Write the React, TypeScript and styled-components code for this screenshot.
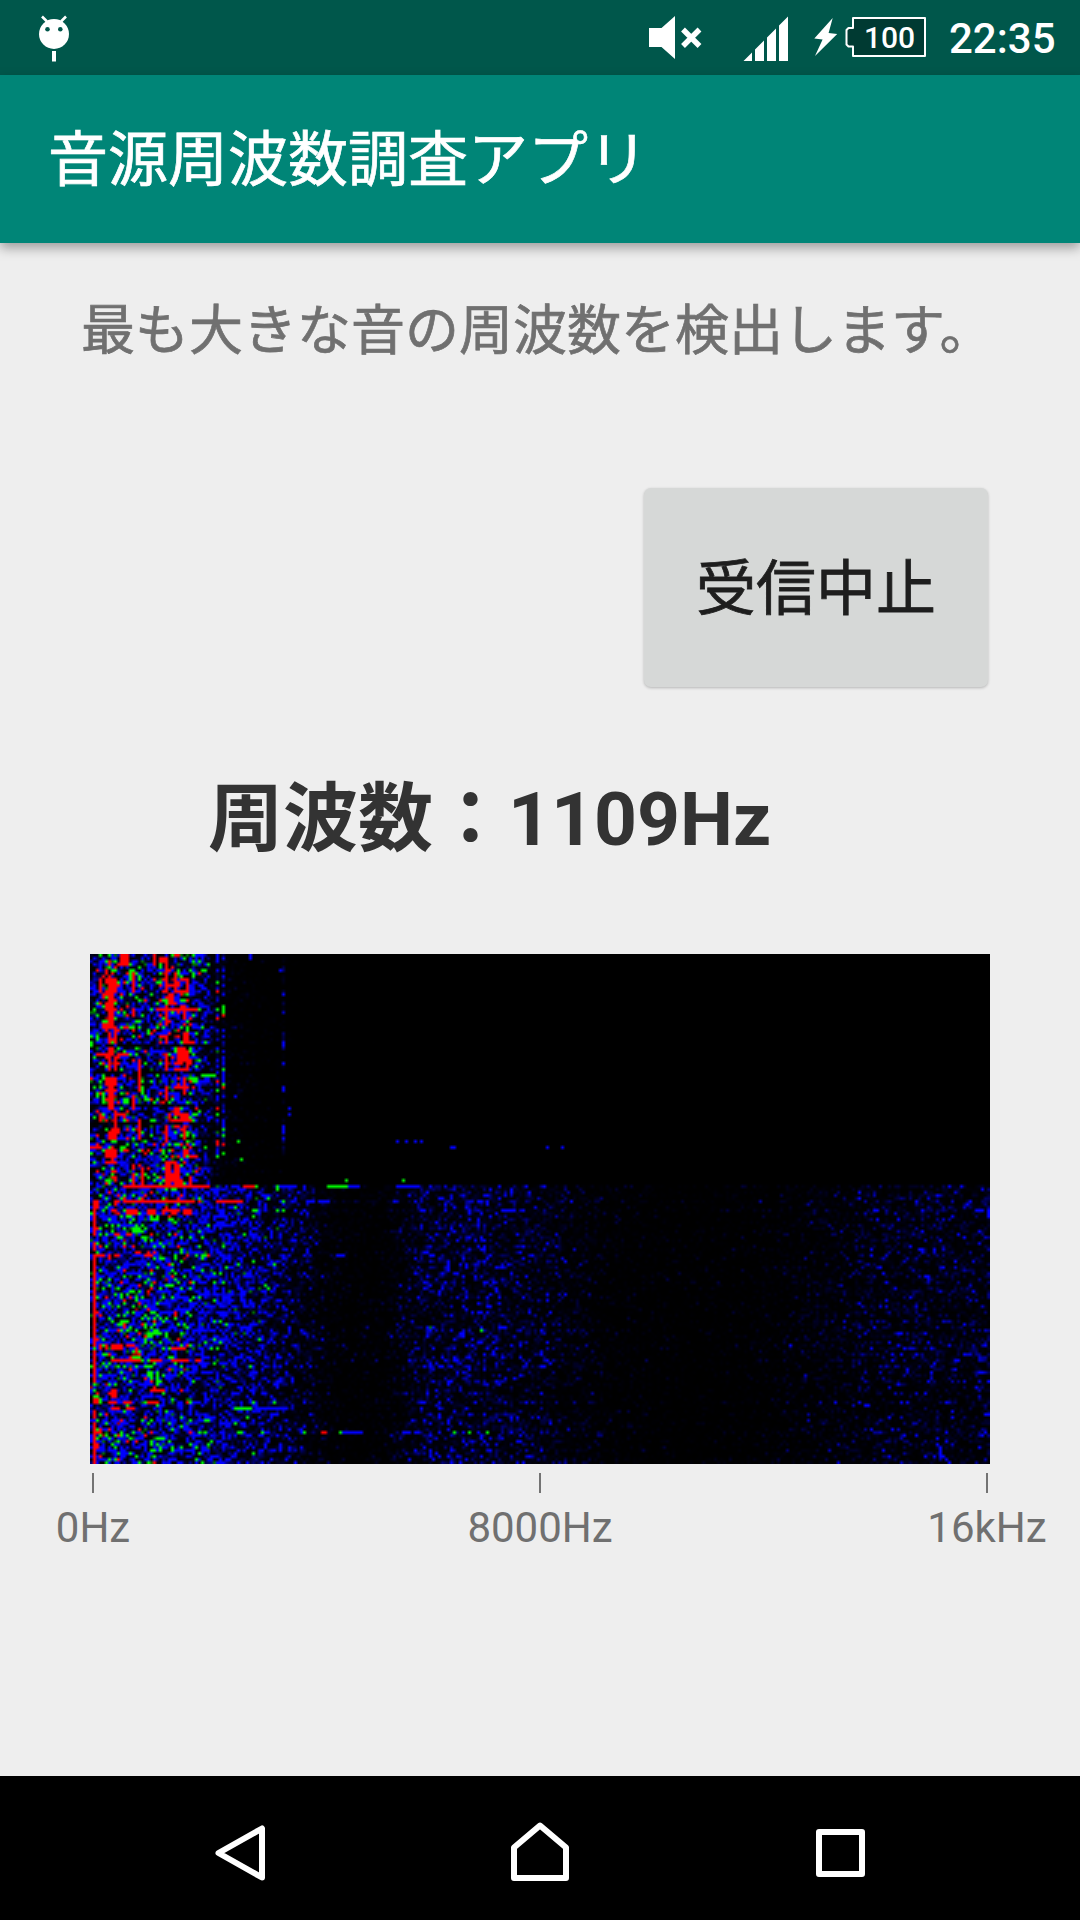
import React, { useEffect, useRef } from "react";
import styled, { createGlobalStyle } from "styled-components";

const GlobalStyle = createGlobalStyle`
  *, *::before, *::after { box-sizing: border-box; }
  body { margin: 0; background: #eeeeee; }
`;

const Screen = styled.div`
  width: 1080px;
  height: 1920px;
  display: flex;
  flex-direction: column;
  overflow: hidden;
  background: #eeeeee;
  font-family: Roboto, "Noto Sans CJK JP", sans-serif;
`;

const StatusBar = styled.header`
  height: 75px;
  flex: none;
  display: flex;
  align-items: center;
  justify-content: space-between;
  padding: 0 23px 0 38px;
  background: #00574b;
  color: #fff;
`;

const StatusIcon = styled.svg`
  display: block;
  flex: none;
`;

const StatusGroup = styled.div`
  display: flex;
  align-items: center;
  height: 75px;
`;

const StatusIcons = styled.div`
  display: flex;
  > :nth-child(2) { margin-left: 41px; }
  > :nth-child(3) { margin-left: 25px; }
`;

const Battery = styled.div`
  display: grid;
  margin-left: 7px;
  > * { grid-area: 1 / 1; }
`;

const BatteryLevel = styled.span`
  padding-left: 7px;
  text-align: center;
  font-size: 30px;
  font-weight: 500;
  line-height: 75px;
`;

const Clock = styled.time`
  width: 108px;
  margin-left: 22px;
  padding-top: 2px;
  font-size: 42px;
  font-weight: 500;
  line-height: 78px;
  white-space: nowrap;
`;

const Toolbar = styled.div`
  position: relative;
  flex: none;
  height: 168px;
  display: flex;
  align-items: center;
  padding: 3px 0 0 48px;
  background: #008577;
  box-shadow: 0 5px 11px rgba(0, 0, 0, 0.34);
`;

const Title = styled.h1`
  margin: 0;
  color: #fff;
  font-size: 60px;
  font-weight: 400;
  line-height: 84px;
  -webkit-text-stroke: 0.7px currentColor;
`;

const Content = styled.main`
  flex: 1;
  display: flex;
  flex-direction: column;
`;

const Description = styled.p`
  margin: 49px 0 0 81px;
  font-size: 54px;
  line-height: 80px;
  color: #707070;
  white-space: nowrap;
  -webkit-text-stroke: 0.7px currentColor;
`;

const StopButton = styled.button`
  align-self: flex-end;
  width: 344px;
  height: 199px;
  margin: 116px 92px 0 0;
  padding: 5px 0 0;
  border: 0;
  border-radius: 7px;
  background: #d6d8d7;
  box-shadow: 0 1px 3px rgba(0, 0, 0, 0.24);
  color: #1e1e1e;
  font-family: inherit;
  font-size: 60px;
  line-height: 84px;
  -webkit-text-stroke: 0.8px currentColor;
`;

const Frequency = styled.p`
  margin: 80px 0 0 208px;
  font-size: 75px;
  font-weight: 700;
  line-height: 104px;
  color: #333333;
  white-space: nowrap;
`;

const Spectrogram = styled.canvas`
  display: block;
  width: 900px;
  height: 510px;
  margin: 83px 0 0 90px;
  background: #000;
`;

const Axis = styled.div`
  display: flex;
  justify-content: space-between;
  margin: 9px 13px 0 13px;
`;

const Mark = styled.div`
  width: 160px;
  display: flex;
  flex-direction: column;
  align-items: center;
  gap: 10px;
  font-size: 42px;
  line-height: 50px;
  color: #707070;
  &::before {
    content: "";
    width: 2px;
    height: 20px;
    background: #737373;
  }
`;

const NavBar = styled.nav`
  flex: none;
  height: 144px;
  display: flex;
  align-items: center;
  justify-content: center;
  gap: 210px;
  background: #000;
`;

const NavButton = styled.button`
  width: 90px;
  height: 90px;
  padding: 0;
  border: 0;
  background: none;
  svg { display: block; }
`;

const COLS = 300;
const ROWS = 170;

type Point = [number, number];
type Block = [number, number, number, number];

/* Mean level per frequency bin while sound is played (upper part). */
const loudProfile: Point[] = [
  [0, 0.8], [1, 0.9], [2, 1.5], [4, 1.7], [9, 1.5], [12, 1.6], [16, 1.1], [22, 1.1], [24, 1.8],
  [31, 2.1], [34, 1.2], [37, 0.6], [40, 0.28], [43, 0.11], [55, 0.06], [66, 0.025], [80, 0.005], [300, 0],
];
/* Mean level per frequency bin for the ambient noise (lower part). */
const noiseProfile: Point[] = [
  [0, 1.3], [3, 1.35], [18, 1.45], [27, 1.2], [32, 1.0], [38, 0.95], [48, 0.75], [58, 0.5], [68, 0.32], [78, 0.15],
  [88, 0.08], [98, 0.1], [106, 0.24], [112, 0.36], [133, 0.37], [145, 0.28], [160, 0.2],
  [172, 0.1], [200, 0.06], [225, 0.09], [245, 0.16], [258, 0.22], [275, 0.25], [299, 0.26],
];

/* Saturated areas: first column, last column, first row, last row. */
const peaks: Block[] = [
  [10, 12, 0, 3], [21, 21, 0, 3], [23, 25, 1, 2], [28, 29, 0, 0], [25, 25, 4, 12], [28, 28, 6, 12],
  [29, 29, 9, 10], [30, 32, 8, 8], [32, 32, 8, 12], [28, 31, 12, 12], [14, 14, 6, 12], [5, 8, 8, 8],
  [6, 8, 9, 12], [5, 7, 13, 13], [3, 3, 8, 12], [6, 7, 14, 23], [5, 7, 16, 16], [26, 27, 13, 16],
  [23, 35, 18, 18], [31, 31, 17, 21], [25, 25, 17, 23], [14, 14, 18, 20], [4, 7, 24, 24],
  [6, 6, 26, 29], [8, 8, 24, 29], [23, 25, 27, 27], [25, 25, 27, 29], [31, 32, 26, 29], [33, 34, 29, 29],
  [6, 7, 31, 32], [5, 7, 33, 33], [3, 4, 33, 33], [9, 12, 33, 33], [16, 16, 35, 44], [6, 6, 34, 38],
  [8, 8, 34, 38], [29, 31, 31, 35], [28, 30, 36, 36], [28, 32, 38, 38], [32, 32, 32, 37], [25, 25, 33, 38],
  [5, 8, 41, 43], [6, 7, 44, 51], [31, 31, 41, 46], [28, 32, 44, 44], [25, 25, 44, 48],
  [8, 8, 52, 61], [6, 7, 59, 61], [5, 8, 65, 67], [9, 11, 53, 53], [28, 29, 51, 53], [30, 32, 53, 54],
  [28, 32, 55, 55], [3, 3, 53, 55], [0, 3, 64, 64], [31, 32, 65, 66], [33, 35, 67, 67], [25, 25, 57, 62],
  [31, 31, 57, 61], [25, 28, 69, 69], [25, 26, 70, 77], [28, 29, 70, 77], [27, 27, 73, 75], [17, 17, 71, 77],
  [14, 14, 70, 71], [14, 14, 73, 77], [33, 33, 74, 77], [16, 16, 55, 61], [14, 14, 47, 51],
  [11, 39, 77, 77], [51, 54, 77, 77], [8, 9, 82, 82], [11, 34, 82, 82], [36, 36, 82, 82], [42, 50, 82, 82],
  [7, 8, 85, 85], [12, 15, 85, 86], [19, 21, 85, 86], [24, 29, 85, 85], [27, 28, 86, 86], [31, 33, 85, 86],
  [1, 2, 82, 84], [1, 1, 85, 93], [8, 9, 93, 93], [12, 13, 93, 93], [20, 20, 93, 93], [1, 1, 96, 98],
  [1, 4, 100, 100], [6, 6, 100, 100], [8, 9, 100, 100], [19, 20, 100, 100], [32, 32, 100, 100], [39, 39, 100, 100],
  [1, 1, 101, 130], [7, 10, 130, 131], [12, 14, 130, 130], [3, 3, 130, 130], [5, 5, 130, 131], [27, 31, 131, 131], [32, 32, 130, 130],
  [1, 1, 132, 142], [7, 16, 135, 135], [20, 23, 135, 135], [27, 32, 135, 135], [35, 36, 135, 135],
  [7, 8, 145, 147], [6, 7, 146, 146], [20, 24, 145, 145], [1, 2, 148, 149], [6, 8, 149, 149], [11, 13, 149, 149],
  [19, 22, 149, 149], [7, 9, 151, 151], [12, 14, 151, 151], [1, 1, 152, 154], [1, 1, 156, 158], [1, 3, 159, 159],
  [1, 1, 160, 169], [2, 2, 163, 164], [3, 3, 167, 167], [20, 20, 159, 159], [33, 33, 159, 159], [77, 78, 159, 159],
  [42, 42, 12, 12], [42, 42, 21, 21], [44, 44, 20, 20], [42, 42, 42, 42], [42, 42, 51, 51], [42, 42, 62, 63],
  [44, 44, 63, 63], [44, 44, 44, 44],
];
const greens: Block[] = [
  [53, 55, 77, 77], [62, 62, 77, 77], [79, 85, 77, 77], [85, 85, 75, 75], [104, 104, 75, 75],
  [54, 55, 85, 85], [62, 62, 85, 85], [64, 64, 85, 85], [64, 64, 82, 82], [59, 59, 81, 81],
  [37, 38, 5, 5], [37, 41, 40, 40], [44, 44, 17, 19], [42, 42, 9, 9], [42, 42, 18, 18], [44, 44, 38, 38],
  [42, 42, 45, 45], [44, 44, 58, 58], [44, 44, 60, 60], [44, 44, 66, 66], [50, 50, 68, 68], [49, 49, 62, 62],
  [19, 20, 126, 127], [20, 23, 126, 126], [19, 20, 139, 140], [22, 22, 139, 143], [58, 58, 110, 110], [59, 59, 111, 111],
  [48, 53, 151, 151], [61, 61, 149, 149], [49, 50, 159, 159], [57, 57, 159, 159], [83, 83, 159, 159], [71, 71, 159, 159], [121, 121, 159, 159], [126, 126, 159, 159],
  [132, 132, 159, 159], [22, 24, 161, 161], [14, 16, 91, 92], [20, 20, 87, 88], [13, 14, 5, 8],
];
const blues: Block[] = [
  [63, 68, 77, 77], [86, 89, 77, 77], [102, 109, 77, 77], [72, 74, 82, 82], [76, 79, 82, 82],
  [42, 42, 0, 2], [53, 53, 0, 1], [64, 64, 13, 13], [64, 64, 30, 30], [64, 64, 44, 45], [64, 64, 57, 59],
  [64, 64, 61, 61], [66, 66, 51, 51], [66, 66, 53, 53], [63, 63, 5, 5], [48, 48, 47, 47], [64, 64, 36, 36],
  [102, 102, 62, 62], [105, 105, 62, 62], [108, 108, 62, 62], [110, 110, 62, 62], [120, 121, 64, 64], [152, 152, 64, 64],
  [157, 157, 64, 64], [82, 84, 100, 100], [55, 65, 151, 151], [84, 90, 159, 159], [104, 106, 159, 159], [108, 109, 159, 159],
  [119, 119, 102, 105], [137, 140, 85, 85], [295, 297, 85, 85], [299, 299, 85, 87], [278, 279, 107, 107],
  [269, 270, 126, 126], [258, 259, 150, 150], [298, 299, 153, 153], [283, 284, 167, 167],
  [283, 283, 164, 166], [285, 285, 168, 168], [286, 286, 169, 169], [136, 138, 124, 124],
];

function createRandom(seed: number) {
  let s = seed;
  return () => {
    s = (s + 0x6d2b79f5) | 0;
    let t = Math.imul(s ^ (s >>> 15), 1 | s);
    t = (t + Math.imul(t ^ (t >>> 7), 61 | t)) ^ t;
    return ((t ^ (t >>> 14)) >>> 0) / 4294967296;
  };
}

function sample(profile: Point[], x: number) {
  for (let i = 1; i < profile.length; i++) {
    const [x0, y0] = profile[i - 1];
    const [x1, y1] = profile[i];
    if (x <= x1) return y0 + ((y1 - y0) * (x - x0)) / (x1 - x0);
  }
  return profile[profile.length - 1][1];
}

function levelColor(v: number): [number, number, number] {
  if (v < 1) return [0, 0, Math.round(255 * v * v)];
  if (v < 2.7) return [0, 0, 255];
  if (v < 3.1) return [0, 110, 0];
  if (v < 5.4) return [0, 245, 0];
  if (v < 5.8) return [150, 0, 0];
  return [255, 0, 0];
}

function buildLevels() {
  const random = createRandom(1109);
  const levels = new Float32Array(COLS * ROWS);
  for (let r = 0; r < ROWS; r++) {
    const loud = r < 77;
    let gain = loud ? 0.75 + random() * 0.5 : 0.9 + random() * 0.2;
    if ([30, 39, 50, 56].includes(r)) gain = 0.15;
    if ([77, 82, 85, 130, 135, 149, 159].includes(r)) gain = 1.25;
    if (r > 143 && r < 153 && r !== 149) gain *= 0.8;
    for (let c = 0; c < COLS; c++) {
      let mean = sample(loud ? loudProfile : noiseProfile, c) * gain;
      let spread = 1;
      if (loud && c < 40) spread = 1.35;
      if (!loud && c < 34) spread = 1.15;
      if (loud && c >= 5 && c <= 8) mean *= 1.6;
      if (loud && r < 68 && (c === 42 || c === 44)) mean = 0.75;
      if (loud && r < 68 && c === 64) mean = 0.25;
      if (c === 0) mean = 0.9;
      levels[r * COLS + c] = Math.pow(-Math.log(1 - random()), spread) * mean;
    }
  }
  const fill = (blocks: Block[], value: number) =>
    blocks.forEach(([c0, c1, r0, r1]) => {
      for (let r = r0; r <= r1; r++) for (let c = c0; c <= c1; c++) levels[r * COLS + c] = value;
    });
  fill(blues, 1.5);
  fill(greens, 4);
  fill(peaks, 8);
  return levels;
}

function SpectrogramView() {
  const ref = useRef<HTMLCanvasElement>(null);
  useEffect(() => {
    const ctx = ref.current?.getContext("2d");
    if (!ctx) return;
    const image = ctx.createImageData(COLS, ROWS);
    buildLevels().forEach((v, i) => {
      const [r, g, b] = levelColor(v);
      image.data.set([r, g, b, 255], i * 4);
    });
    ctx.putImageData(image, 0, 0);
  }, []);
  return <Spectrogram ref={ref} width={COLS} height={ROWS} />;
}

const DroidIcon = () => (
  <StatusIcon width="32" height="75" viewBox="38 0 32 75" fill="#fff">
    <path d="M42 16.500l5 5M66 16.500l-5 5" stroke="#fff" strokeWidth="2.6" />
    <circle cx="54" cy="34" r="15" />
    <circle cx="47.500" cy="29.300" r="2.300" fill="#00574b" />
    <circle cx="60.300" cy="29.300" r="2.300" fill="#00574b" />
    <path d="M52 51h4v10.500h-4z" />
  </StatusIcon>
);

const MuteIcon = () => (
  <StatusIcon width="54" height="75" viewBox="648 0 54 75" fill="#fff">
    <path d="M649 28h12.500L675 16v43L661.500 47H649z" />
    <path d="M683 29.500L699.500 46M699.500 29.500L683 46" stroke="#fff" strokeWidth="5.4" />
  </StatusIcon>
);

const SignalIcon = () => (
  <StatusIcon width="46" height="75" viewBox="743 0 46 75" fill="#fff">
    <path d="M743.500 61L752 52.500V61zM755 61V49.500L764 40.500V61zM767 61V37.500L776 28.500V61zM779 61V25.500L788 16.500V61z" />
  </StatusIcon>
);

const BoltIcon = () => (
  <StatusIcon width="24" height="75" viewBox="814 0 24 75" fill="#fff">
    <path d="M832.700 18L814.300 38.500L822.600 39.500L815 56L837.200 34L828.600 33z" />
  </StatusIcon>
);

const BatteryIcon = () => (
  <StatusIcon width="82" height="75" viewBox="845 0 82 75">
    <path d="M853 18h72v38h-72v-9.500h-4.500l-2-2V30l2-2h4.500z" fill="#003a32" stroke="#fff" strokeWidth="2" strokeLinejoin="round" />
  </StatusIcon>
);

export default function App() {
  return (
    <>
      <GlobalStyle />
      <Screen>
        <StatusBar>
          <DroidIcon />
          <StatusGroup>
            <StatusIcons>
              <MuteIcon />
              <SignalIcon />
              <BoltIcon />
            </StatusIcons>
            <Battery>
              <BatteryIcon />
              <BatteryLevel>100</BatteryLevel>
            </Battery>
            <Clock>22:35</Clock>
          </StatusGroup>
        </StatusBar>
        <Toolbar>
          <Title>音源周波数調査アプリ</Title>
        </Toolbar>
        <Content>
          <Description>最も大きな音の周波数を検出します。</Description>
          <StopButton>受信中止</StopButton>
          <Frequency>周波数：1109Hz</Frequency>
          <SpectrogramView />
          <Axis>
            <Mark>0Hz</Mark>
            <Mark>8000Hz</Mark>
            <Mark>16kHz</Mark>
          </Axis>
        </Content>
        <NavBar>
          <NavButton aria-label="Back">
            <svg width="90" height="90" viewBox="195 1803 90 90" fill="none" stroke="#fff" strokeWidth="6" strokeLinejoin="round">
              <path d="M262 1828.500V1877.500L218.500 1853z" />
            </svg>
          </NavButton>
          <NavButton aria-label="Home">
            <svg width="90" height="90" viewBox="495 1803 90 90" fill="none" stroke="#fff" strokeWidth="6" strokeLinejoin="round">
              <path d="M514 1878V1847.500L540 1825.500L566 1847.500V1878z" />
            </svg>
          </NavButton>
          <NavButton aria-label="Recent apps">
            <svg width="90" height="90" viewBox="795 1803 90 90" fill="none" stroke="#fff" strokeWidth="6" strokeLinejoin="round">
              <path d="M819 1832h43v42h-43z" />
            </svg>
          </NavButton>
        </NavBar>
      </Screen>
    </>
  );
}
